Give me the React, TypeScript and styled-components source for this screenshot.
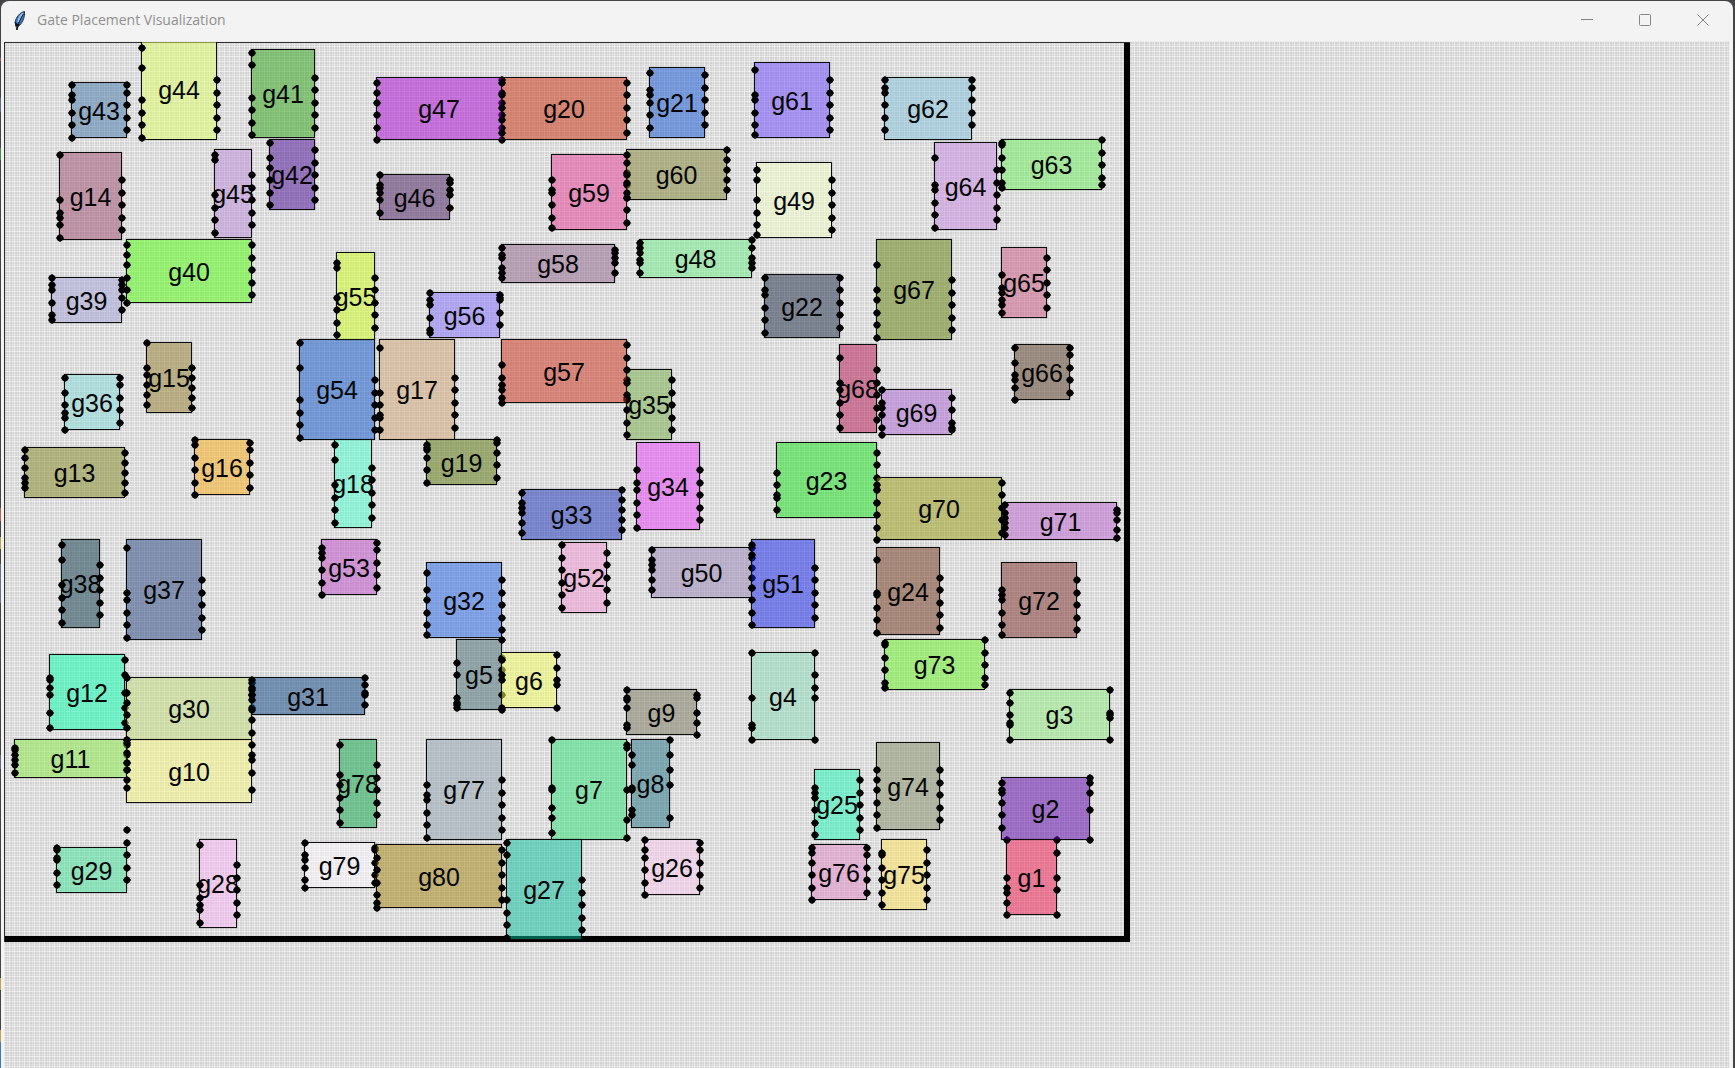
import React from "react";
import styled, { createGlobalStyle } from "styled-components";

const UNIT = 2.5;
const BOARD_COLS = 450;
const BOARD_ROWS = 360;
const CANVAS_GREY = 222;

type Gate = {
  id: number;
  x: number;
  y: number;
  w: number;
  h: number;
  tone: string;
  inputs: number[];
  outputs: number[];
};

const gate = (
  id: number,
  x: number,
  y: number,
  w: number,
  h: number,
  tone: string,
  inputs: number[],
  outputs: number[]
): Gate => ({ id, x, y, w, h, tone, inputs, outputs });

const gates: Gate[] = [
  gate(1, 401, 319, 20, 30, "e87a96", [0, 15, 19, 21, 25, 30], [0, 5, 15, 20, 30]),
  gate(2, 399, 294, 35, 25, "9c6fc4", [2, 5, 6, 10, 15, 20], [0, 2, 6, 13, 25]),
  gate(3, 402, 259, 40, 20, "b6e6ae", [1, 5, 10, 13, 14, 20], [0, 9, 10, 11, 20]),
  gate(4, 299, 244, 25, 35, "b4dccb", [0, 18, 29, 30, 35], [0, 9, 14, 18, 35]),
  gate(5, 181, 239, 18, 28, "90a3a6", [9, 14, 23, 25, 26, 27], [0, 7, 8, 12, 22, 28]),
  gate(6, 199, 244, 22, 22, "e9f19c", [3, 9, 11, 22], [1, 6, 11, 13, 22]),
  gate(7, 219, 279, 30, 40, "84dfa9", [0, 19, 20, 27, 31, 37], [2, 3, 20, 32, 39]),
  gate(8, 251, 279, 15, 35, "7ea7b0", [6, 10, 19, 20, 28, 30], [0, 6, 12, 18, 31]),
  gate(9, 249, 259, 28, 18, "aaa99c", [0, 3, 4, 7, 14, 15], [2, 3, 9, 13, 18]),
  gate(10, 49, 279, 50, 25, "ecebae", [2, 6, 9, 12, 16, 19], [2, 6, 8, 13, 20]),
  gate(11, 4, 279, 45, 15, "b2e38f", [3, 4, 6, 8, 10, 13], [0, 1, 5, 9, 12]),
  gate(12, 18, 245, 30, 30, "70f0c4", [9, 10, 13, 16, 23, 29], [2, 8, 15, 21, 27]),
  gate(13, 8, 162, 40, 20, "b0b27f", [1, 4, 8, 12, 14, 16], [2, 6, 10, 14, 18]),
  gate(14, 22, 44, 25, 35, "bd93a6", [1, 19, 24, 26, 29, 34], [11, 16, 21, 26, 31]),
  gate(15, 57, 120, 18, 28, "b9ad85", [0, 10, 13, 17, 21, 25], [10, 14, 18, 22, 26]),
  gate(16, 76, 159, 22, 22, "edc579", [0, 2, 7, 12, 17, 22], [1, 4, 9, 14, 19]),
  gate(17, 150, 119, 30, 40, "d7c1a9", [3, 21, 26, 30, 31, 36], [15, 20, 25, 30, 35]),
  gate(18, 132, 159, 15, 35, "93f2d5", [2, 8, 18, 23, 28, 33], [11, 16, 21, 26, 31]),
  gate(19, 169, 159, 28, 18, "9aa871", [2, 3, 4, 7, 12, 17], [0, 1, 5, 10, 15]),
  gate(20, 199, 14, 50, 25, "d48472", [1, 6, 10, 15, 20, 25], [2, 7, 12, 17, 22]),
  gate(21, 258, 10, 22, 28, "7799da", [2, 9, 11, 14, 19, 24], [3, 8, 13, 18, 23]),
  gate(22, 304, 93, 30, 25, "7c8390", [1, 6, 8, 13, 18, 23], [1, 6, 11, 16, 21]),
  gate(23, 309, 160, 40, 30, "7ae07b", [12, 17, 21, 22, 27], [4, 9, 14, 19, 24]),
  gate(24, 349, 202, 25, 35, "a6897a", [5, 18, 19, 24, 29, 34], [12, 17, 22, 27, 32]),
  gate(25, 324, 291, 18, 28, "7deac9", [7, 9, 11, 16, 21, 26], [4, 9, 14, 19, 24]),
  gate(26, 256, 319, 22, 22, "ecd4e6", [0, 4, 7, 12, 17, 22], [1, 4, 9, 14, 19]),
  gate(27, 201, 319, 30, 40, "72cfbe", [1, 6, 24, 29, 34, 39], [16, 21, 26, 31, 36]),
  gate(28, 78, 319, 15, 35, "ecc9ea", [2, 18, 23, 26, 28, 33], [10, 15, 20, 25, 30]),
  gate(29, 21, 322, 28, 18, "8ee0bb", [0, 1, 4, 5, 10, 15], [-7, -2, 3, 8, 13]),
  gate(30, 49, 254, 50, 25, "ceddaa", [0, 6, 10, 15, 20, 25], [2, 7, 12, 17, 22]),
  gate(31, 99, 254, 45, 15, "7390b0", [1, 4, 5, 7, 9, 13], [0, 3, 6, 7, 11]),
  gate(32, 169, 208, 30, 30, "80a0e4", [4, 11, 15, 20, 25, 29], [7, 12, 17, 22, 27]),
  gate(33, 207, 179, 40, 20, "7a86cc", [1, 5, 7, 9, 13, 17], [0, 4, 8, 12, 16]),
  gate(34, 253, 160, 25, 35, "e38eec", [11, 16, 19, 24, 29, 34], [11, 16, 21, 26, 31]),
  gate(35, 249, 131, 18, 28, "a9c692", [4, 11, 12, 16, 21, 26], [4, 9, 14, 19, 24]),
  gate(36, 24, 133, 22, 22, "b0dcdc", [1, 7, 12, 15, 17, 22], [1, 4, 9, 14, 19]),
  gate(37, 49, 199, 30, 40, "8290b0", [3, 21, 24, 29, 34, 39], [16, 21, 26, 31, 36]),
  gate(38, 23, 199, 15, 35, "748a93", [2, 8, 18, 23, 28, 33], [10, 15, 20, 25, 30]),
  gate(39, 19, 94, 28, 18, "c0c0da", [0, 3, 5, 10, 15, 17], [1, 3, 5, 8, 13]),
  gate(40, 49, 79, 50, 25, "96ef72", [2, 6, 10, 15, 20, 25], [2, 7, 12, 17, 22]),
  gate(41, 99, 3, 25, 35, "84c077", [1, 6, 19, 24, 29, 34], [11, 16, 21, 26, 31]),
  gate(42, 106, 39, 18, 28, "9272b8", [1, 7, 11, 16, 21, 26], [4, 9, 14, 19, 24]),
  gate(43, 27, 16, 22, 22, "90aac3", [1, 5, 7, 12, 17, 22], [1, 4, 9, 14, 19]),
  gate(44, 55, -1, 30, 40, "dff0a2", [3, 11, 24, 29, 34, 39], [16, 21, 26, 31, 36]),
  gate(45, 84, 43, 15, 35, "ccb3dc", [2, 4, 18, 23, 28, 33], [10, 15, 20, 25, 30]),
  gate(46, 150, 53, 28, 18, "927c9e", [0, 4, 5, 7, 10, 15], [2, 3, 6, 8, 13]),
  gate(47, 149, 14, 50, 25, "c470d9", [2, 6, 10, 15, 20, 25], [2, 7, 12, 17, 22]),
  gate(48, 254, 79, 45, 15, "a6e6b2", [1, 3, 5, 8, 9, 13], [0, 3, 7, 9, 11]),
  gate(49, 301, 48, 30, 30, "e8f2d2", [3, 7, 15, 20, 25, 29], [7, 12, 17, 22, 27]),
  gate(50, 259, 202, 40, 20, "bab0ca", [1, 5, 7, 9, 13, 17], [0, 4, 8, 12, 16]),
  gate(51, 299, 199, 25, 35, "7880e6", [2, 6, 19, 24, 29, 34], [11, 16, 21, 26, 31]),
  gate(52, 223, 200, 18, 28, "e8b9d9", [1, 6, 11, 16, 21, 26], [4, 9, 14, 19, 24]),
  gate(53, 127, 199, 22, 22, "cd93d3", [3, 5, 7, 12, 17, 22], [1, 4, 9, 14, 19]),
  gate(54, 118, 119, 30, 40, "7398d4", [1, 11, 24, 29, 34, 39], [16, 21, 26, 31, 36]),
  gate(55, 133, 84, 15, 35, "d6f07c", [4, 6, 18, 23, 28, 33], [10, 15, 20, 25, 30]),
  gate(56, 170, 100, 28, 18, "b0a6f0", [0, 3, 5, 10, 15, 16], [1, 2, 3, 8, 13]),
  gate(57, 199, 119, 50, 25, "d6857b", [10, 15, 18, 20, 23, 25], [2, 7, 12, 17, 22]),
  gate(58, 199, 81, 45, 15, "b6a0b4", [1, 4, 5, 9, 11, 13], [2, 3, 5, 7, 11]),
  gate(59, 219, 45, 30, 30, "e28db9", [10, 14, 15, 20, 25, 29], [7, 12, 17, 22, 27]),
  gate(60, 249, 43, 40, 20, "afaf88", [2, 5, 10, 13, 17, 19], [0, 4, 8, 12, 16]),
  gate(61, 300, 8, 30, 30, "a592ee", [3, 13, 15, 20, 25, 29], [7, 12, 17, 22, 27]),
  gate(62, 352, 14, 35, 25, "b0cfdc", [1, 4, 6, 11, 16, 21], [1, 4, 9, 14, 19]),
  gate(63, 399, 39, 40, 20, "a4e69c", [1, 2, 7, 12, 17, 19], [0, 5, 10, 15, 18]),
  gate(64, 372, 40, 25, 35, "d2b2de", [6, 17, 19, 24, 29, 34], [11, 16, 21, 26, 31]),
  gate(65, 399, 82, 18, 28, "d49ab0", [11, 16, 18, 21, 23, 26], [4, 9, 14, 19, 24]),
  gate(66, 404, 121, 22, 22, "9a8c80", [1, 7, 12, 14, 17, 22], [1, 4, 9, 14, 19]),
  gate(67, 349, 79, 30, 40, "9fae72", [10, 20, 24, 29, 34, 39], [16, 21, 26, 31, 36]),
  gate(68, 334, 121, 15, 35, "ca7898", [5, 15, 18, 23, 28, 33], [10, 15, 20, 25, 30]),
  gate(69, 351, 139, 28, 18, "c5a1d9", [0, 5, 7, 10, 15, 18], [3, 8, 13, 15, 16]),
  gate(70, 349, 174, 50, 25, "bbbc75", [3, 5, 10, 15, 20, 25], [2, 7, 12, 17, 22]),
  gate(71, 400, 184, 45, 15, "cd9fd7", [1, 4, 6, 8, 10, 13], [3, 4, 7, 11, 14]),
  gate(72, 399, 208, 30, 30, "ad8684", [11, 13, 15, 20, 25, 29], [7, 12, 17, 22, 27]),
  gate(73, 352, 239, 40, 20, "a2e980", [1, 2, 7, 12, 17, 19], [0, 5, 10, 15, 18]),
  gate(74, 349, 280, 25, 35, "b0b5a1", [11, 15, 19, 24, 29, 34], [11, 16, 21, 26, 31]),
  gate(75, 351, 319, 18, 28, "efe09c", [5, 6, 11, 16, 21, 26], [4, 9, 14, 19, 24]),
  gate(76, 323, 321, 22, 22, "deb2d0", [1, 3, 7, 12, 17, 22], [1, 4, 9, 14, 19]),
  gate(77, 169, 279, 30, 40, "b6bfc6", [18, 22, 24, 29, 34, 39], [16, 21, 26, 31, 36]),
  gate(78, 134, 279, 15, 35, "73c190", [2, 14, 18, 23, 28, 33], [10, 15, 20, 25, 30]),
  gate(79, 120, 320, 28, 18, "f0ecf0", [0, 5, 7, 10, 15, 18], [2, 3, 8, 13, 16]),
  gate(80, 149, 321, 50, 25, "c0b074", [5, 10, 15, 20, 23, 25], [2, 7, 12, 17, 22]),
];

const px = (units: number) => Math.floor(units * UNIT);

// The fill is laid at half strength over the grey canvas, so its ink is the
// tone pushed away from that grey by the same amount again.
const stipple = (tone: string) => {
  const channel = (i: number) => {
    const seen = parseInt(tone.slice(i, i + 2), 16);
    return Math.max(0, Math.min(255, seen * 2 - CANVAS_GREY));
  };
  return `rgba(${channel(0)}, ${channel(2)}, ${channel(4)}, 0.5)`;
};

const GlobalStyle = createGlobalStyle`
  *, *::before, *::after { box-sizing: border-box; }
  body {
    margin: 0;
    font-family: "Liberation Sans", Arial, sans-serif;
    background: #444345;
  }
`;

const Desktop = styled.div`
  display: flex;
  min-height: 100vh;
  padding: 1px 2px 0 1px;
  background:
    linear-gradient(
        #444345 58px, #b0503c 58px 61px, #444345 61px 98px, #5b6c84 98px 112px,
        #444345 112px 148px, #3f8a46 148px 160px, #444345 160px 508px,
        #c4604a 508px 521px, #444345 521px 537px, #c8a040 537px 549px,
        #444345 549px 564px, #66728a 564px 603px, #444345 603px 755px,
        #5b6c84 755px 769px, #444345 769px 978px, #c8a040 978px 990px,
        #444345 990px 1030px, #c8a040 1030px 1042px, #3a78b8 1042px
      )
      left / 1px 100% no-repeat,
    #444345;
`;

const Window = styled.div`
  flex: 1;
  display: flex;
  flex-direction: column;
  overflow: hidden;
  border-radius: 8px 8px 0 0;
  background: #f3f3f3;
`;

const TitleBar = styled.header`
  display: flex;
  align-items: center;
  height: 40px;
  padding-left: 12px;
  gap: 10px;
`;

const Title = styled.h1`
  flex: 1;
  margin: 0;
  padding-bottom: 2px;
  font: 400 14px/20px "Open Sans", "Noto Sans", sans-serif;
  color: #8f8f8f;
`;

const Controls = styled.div`
  display: flex;
  align-self: stretch;
`;

const ControlButton = styled.button`
  display: grid;
  place-items: center;
  width: 58px;
  padding: 0 2px 3px 0;
  border: 0;
  background: transparent;
  color: #858585;
`;

const Canvas = styled.main`
  flex: 1;
  margin: 0 4px 0 3px;
  padding-top: 1px;
  background:
    linear-gradient(90deg, rgba(255, 255, 255, 0.5) 1px, transparent 1px 3px, rgba(255, 255, 255, 0.25) 3px 4px, transparent 4px)
      0 0 / 5px 5px,
    linear-gradient(rgba(255, 255, 255, 0.5) 1px, transparent 1px 3px, rgba(255, 255, 255, 0.25) 3px 4px, transparent 4px)
      0 0 / 5px 5px,
    #d2d2d2;
`;

const Board = styled.section`
  position: relative;
  overflow: hidden;
  box-shadow: inset 1px 1px 0 #2c2c2c, inset -6px -6px 0 #000;
`;

const GateNode = styled.div`
  position: absolute;
`;

const GateBody = styled.div`
  display: flex;
  align-items: center;
  justify-content: center;
  height: 100%;
  padding-top: 1px;
  border: 1px solid #0c0c0c;
  background-clip: padding-box;
  box-shadow: 0 0 1px rgba(0, 0, 0, 0.5);
`;

const GateLabel = styled.span`
  font-size: 25px;
  line-height: 28px;
  color: #060606;
`;

const Pin = styled.i<{ $side: "input" | "output" }>`
  position: absolute;
  ${({ $side }) => ($side === "input" ? "left: -3px" : "right: -4px")};
  width: 8px;
  height: 8px;
  background: #000;
  clip-path: polygon(50% 0, 80% 20%, 100% 50%, 80% 80%, 50% 100%, 20% 80%, 0 50%, 20% 20%);
`;

function FeatherIcon() {
  return (
    <svg width="14" height="22" viewBox="0 0 14 22" aria-hidden="true">
      <path d="M11.5 1.5C7 2.5 3 7 2 12.5L3 16.5L4 20L5 16.5C9 14 12 8 11.5 1.5Z" fill="#3f7cc4" stroke="#22303f" strokeWidth="1" />
      <path d="M10 3.5C7.5 5 6 8 5.5 12" fill="none" stroke="#9cc6f2" strokeWidth="2" />
      <path d="M10.5 4C8 8 5 13 4 20" fill="none" stroke="#101418" strokeWidth="1" />
      <path d="M2 11.5L2.5 16L5 16.5L7 14L4.5 14Z" fill="#101418" />
    </svg>
  );
}

function GateView({ item }: { item: Gate }) {
  const left = px(item.x);
  const top = px(item.y);
  const width = px(item.x + item.w) - left + 1;
  const height = px(item.y + item.h) - top + 1;
  const pinTop = (offset: number) => px(item.y + offset) - top - 3;
  return (
    <GateNode style={{ left, top, width, height }}>
      <GateBody style={{ backgroundColor: stipple(item.tone) }}>
        <GateLabel>g{item.id}</GateLabel>
      </GateBody>
      {item.inputs.map((offset) => (
        <Pin key={`in-${offset}`} $side="input" style={{ top: pinTop(offset) }} />
      ))}
      {item.outputs.map((offset) => (
        <Pin key={`out-${offset}`} $side="output" style={{ top: pinTop(offset) }} />
      ))}
    </GateNode>
  );
}

export default function App() {
  return (
    <>
      <GlobalStyle />
      <Desktop>
        <Window>
          <TitleBar>
            <FeatherIcon />
            <Title>Gate Placement Visualization</Title>
            <Controls>
              <ControlButton aria-label="Minimize">
                <svg width="12" height="12" viewBox="0 0 12 12" fill="none" stroke="currentColor">
                  <path d="M0 5.5H12" />
                </svg>
              </ControlButton>
              <ControlButton aria-label="Maximize">
                <svg width="12" height="12" viewBox="0 0 12 12" fill="none" stroke="currentColor">
                  <rect x="0.5" y="0.5" width="11" height="11" rx="1" />
                </svg>
              </ControlButton>
              <ControlButton aria-label="Close">
                <svg width="12" height="12" viewBox="0 0 12 12" fill="none" stroke="currentColor">
                  <path d="M0.5 0.5L11.5 11.5M11.5 0.5L0.5 11.5" />
                </svg>
              </ControlButton>
            </Controls>
          </TitleBar>
          <Canvas>
            <Board
              aria-label="Gate placement"
              style={{ width: px(BOARD_COLS) + 1, height: px(BOARD_ROWS) }}
            >
              {gates.map((item) => (
                <GateView key={item.id} item={item} />
              ))}
            </Board>
          </Canvas>
        </Window>
      </Desktop>
    </>
  );
}
